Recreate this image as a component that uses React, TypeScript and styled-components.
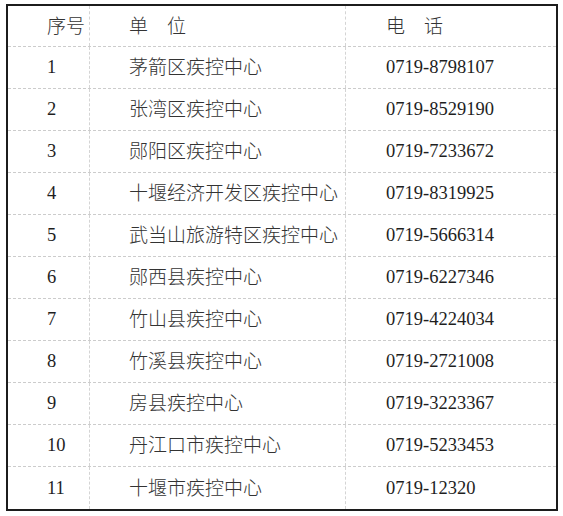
import React from "react";
import styled, { createGlobalStyle } from "styled-components";

const Global = createGlobalStyle`
  html, body { margin: 0; padding: 0; background: #ffffff; }
  body { font-family: "Liberation Serif", "Noto Sans CJK SC", serif; }
`;

const Table = styled.div`
  box-sizing: border-box;
  margin: 4px 0 0 6px;
  width: 552px;
  border: 2px solid #1c1c1c;
  background: #fff;
`;

const Row = styled.div<{ $header?: boolean; $last?: boolean }>`
  box-sizing: border-box;
  display: grid;
  grid-template-columns: 82px 256px 1fr;
  height: ${(p) => (p.$header ? 41 : 42)}px;
  border-bottom: ${(p) => (p.$last ? "none" : "1px dashed #cccccc")};
`;

const Cell = styled.div<{ $divider?: boolean }>`
  box-sizing: border-box;
  display: flex;
  align-items: center;
  padding-left: ${(p) => (p.$divider ? 39 : 40)}px;
  border-right: ${(p) => (p.$divider ? "1px dashed #d4d4d4" : "none")};
  color: #222;
  line-height: 1;
  white-space: nowrap;
`;

const Han = styled.span`
  display: block;
  padding-bottom: 4px;
  font-family: "Noto Sans CJK SC", sans-serif;
  font-weight: 300;
  font-size: 19px;
  line-height: 1;
  color: #333;
`;

const Num = styled.span`
  display: block;
  font-family: "Liberation Serif", serif;
  font-size: 18.5px;
  line-height: 1;
  color: #1e1e1e;
`;

const rows: [string, string][] = [
  ["茅箭区疾控中心", "0719-8798107"],
  ["张湾区疾控中心", "0719-8529190"],
  ["郧阳区疾控中心", "0719-7233672"],
  ["十堰经济开发区疾控中心", "0719-8319925"],
  ["武当山旅游特区疾控中心", "0719-5666314"],
  ["郧西县疾控中心", "0719-6227346"],
  ["竹山县疾控中心", "0719-4224034"],
  ["竹溪县疾控中心", "0719-2721008"],
  ["房县疾控中心", "0719-3223367"],
  ["丹江口市疾控中心", "0719-5233453"],
  ["十堰市疾控中心", "0719-12320"],
];

export default function App() {
  return (
    <>
      <Global />
      <Table>
        <Row $header>
          <Cell $divider>
            <Han>序号</Han>
          </Cell>
          <Cell $divider>
            <Han>单　位</Han>
          </Cell>
          <Cell>
            <Han>电　话</Han>
          </Cell>
        </Row>
        {rows.map(([name, phone], i) => (
          <Row key={i} $last={i === rows.length - 1}>
            <Cell $divider>
              <Num>{i + 1}</Num>
            </Cell>
            <Cell $divider>
              <Han>{name}</Han>
            </Cell>
            <Cell>
              <Num>{phone}</Num>
            </Cell>
          </Row>
        ))}
      </Table>
    </>
  );
}
